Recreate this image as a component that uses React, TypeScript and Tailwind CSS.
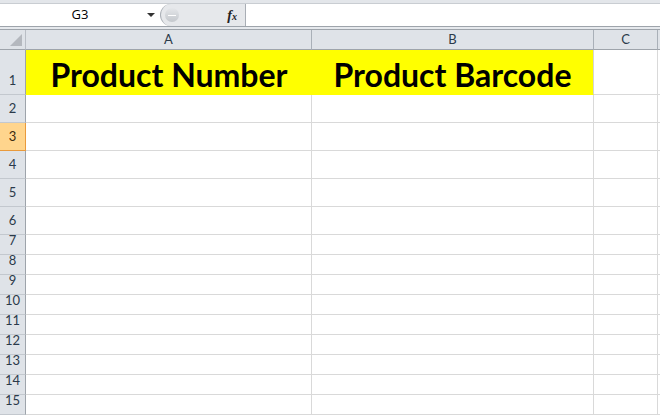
import React from 'react';

// column widths include the right grid line
const cols = [
  { label: 'A', w: 'w-[286px]' },
  { label: 'B', w: 'w-[282px]' },
  { label: 'C', w: 'w-[64px]' },
];

// row heights include the bottom grid line
const rows = [
  { n: 1, h: 'h-[45px]' },
  { n: 2, h: 'h-[28px]' },
  { n: 3, h: 'h-[28px]' },
  { n: 4, h: 'h-[28px]' },
  { n: 5, h: 'h-[28px]' },
  { n: 6, h: 'h-[28px]' },
  { n: 7, h: 'h-[20px]' },
  { n: 8, h: 'h-[20px]' },
  { n: 9, h: 'h-[20px]' },
  { n: 10, h: 'h-[20px]' },
  { n: 11, h: 'h-[20px]' },
  { n: 12, h: 'h-[20px]' },
  { n: 13, h: 'h-[20px]' },
  { n: 14, h: 'h-[20px]' },
  { n: 15, h: 'h-[20px]' },
];

const headerFont = { fontFamily: 'Lato, "Noto Sans", sans-serif' };

const FormulaBar = () => (
  <div className="flex h-[24px] border-t border-b border-t-[#c9cdd2] border-b-[#9ea4ab] bg-white">
    {/* Name box */}
    <div className="relative flex w-[160px] items-center justify-center">
      <span className="text-[13px] text-black" style={{ fontFamily: '"Open Sans", sans-serif' }}>
        G3
      </span>
      <span className="absolute right-[5px] top-[9px] h-0 w-0 border-l-[4px] border-r-[4px] border-t-[4px] border-l-transparent border-r-transparent border-t-[#333]" />
    </div>
    {/* fx widget */}
    <div className="relative flex w-[86px] items-center justify-end rounded-l-[12px] border-l border-r border-l-[#a9aeb5] border-r-[#a9aeb5] bg-[#e6e8eb] pr-[8px]">
      <span className="absolute left-[4px] top-[4px] h-[14px] w-[14px] rounded-full bg-gradient-to-b from-[#e4e6e9] to-[#c4c8cd]">
        <span className="absolute left-[3px] top-[7px] h-[1px] w-[8px] bg-white" />
      </span>
      <span className="text-[14px] italic font-bold text-[#222]" style={{ fontFamily: '"Liberation Serif", serif' }}>
        f<span className="text-[10px]">x</span>
      </span>
    </div>
    <div className="flex-1 bg-white" />
  </div>
);

const ColumnHeaders = () => (
  <div className="flex h-[21px] border-t border-t-[#9ea4ab] bg-[#dfe3e8]" style={headerFont}>
    <div className="relative w-[26px] border-r border-b border-r-[#b9bec5] border-b-[#9ea4ab]">
      <svg className="absolute bottom-[3px] right-[3px]" width="12" height="12" viewBox="0 0 12 12">
        <polygon points="12,0 12,12 0,12" fill="#b4b8be" />
      </svg>
    </div>
    {cols.map((c) => (
      <div
        key={c.label}
        className={`${c.w} flex items-center justify-center border-r border-b border-r-[#a9b0b8] border-b-[#9ea4ab] text-[13px] text-[#2b3a4a]`}
      >
        {c.label}
      </div>
    ))}
    <div className="flex-1 border-b border-b-[#9ea4ab]" />
  </div>
);

const Row = ({ n, h }: { n: number; h: string }) => {
  const selected = n === 3;
  return (
    <div className={`flex ${h}`}>
      <div
        className={`w-[26px] flex items-end justify-center pb-[4px] border-r border-b text-[13px] ${
          selected
            ? 'bg-[#ffd58d] border-r-[#e99a3c] border-b-[#e99a3c] text-[#3a2a10]'
            : 'bg-[#dfe3e8] border-r-[#9ea4ab] border-b-[#c3c8ce] text-[#2b3a4a]'
        }`}
        style={headerFont}
      >
        {n}
      </div>
      {n === 1 ? (
        <>
          <div className="w-[286px] flex items-end justify-center bg-[#ffff00] pb-[3px] border-b border-b-[#ffff00]">
            <span className="text-[32px] font-bold leading-none text-black" style={headerFont}>
              Product Number
            </span>
          </div>
          <div className="w-[282px] flex items-end justify-center bg-[#ffff00] pb-[3px] border-b border-r border-b-[#ffff00] border-r-[#d4d4d4]">
            <span className="text-[32px] font-bold leading-none text-black" style={headerFont}>
              Product Barcode
            </span>
          </div>
        </>
      ) : (
        <>
          <div className="w-[286px] border-r border-b border-[#d9d9d9]" />
          <div className="w-[282px] border-r border-b border-[#d9d9d9]" />
        </>
      )}
      <div className="w-[64px] border-r border-b border-[#d9d9d9]" />
      <div className="flex-1 border-b border-[#d9d9d9]" />
    </div>
  );
};

export default function App() {
  return (
    <div className="w-[660px] h-[415px] overflow-hidden bg-white">
      <div className="h-[3px] bg-[#e3e6ea]" />
      <FormulaBar />
      <div className="h-[2px] bg-[#e6e9ed]" />
      <ColumnHeaders />
      {rows.map((r) => (
        <Row key={r.n} n={r.n} h={r.h} />
      ))}
    </div>
  );
}
